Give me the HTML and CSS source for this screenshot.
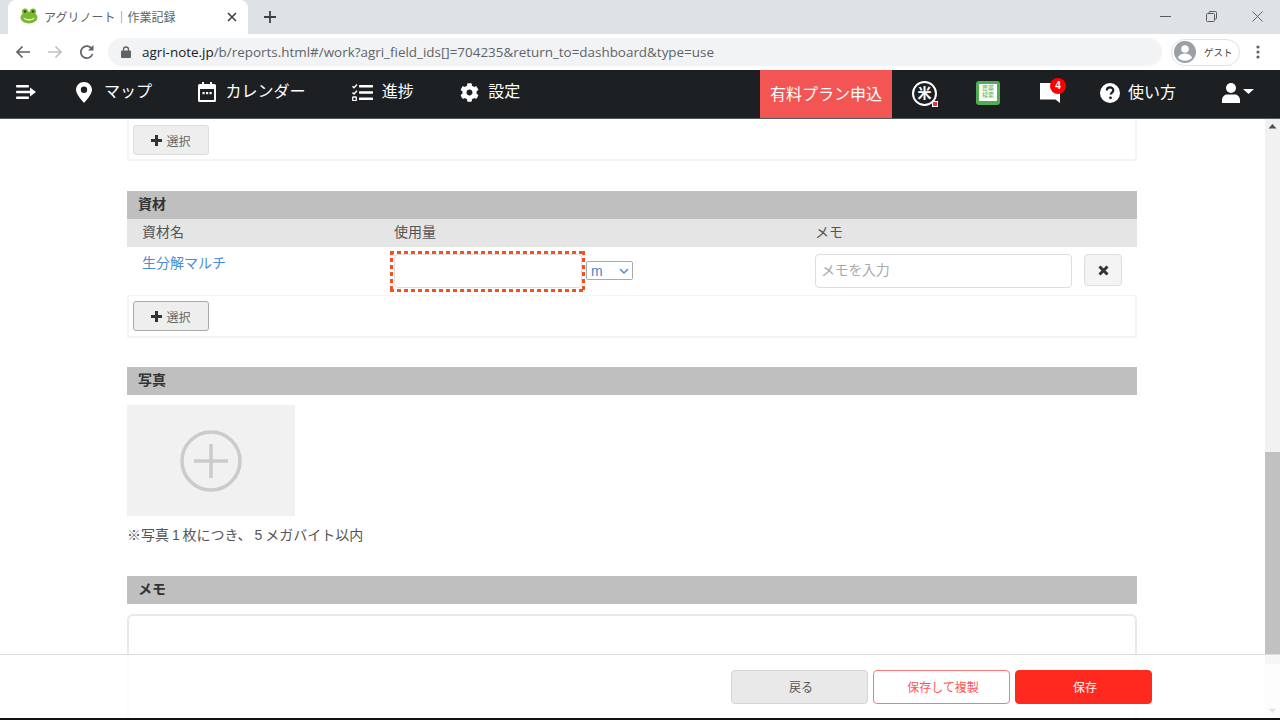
FILE: index.html
```html
<!DOCTYPE html>
<html lang="ja">
<head>
<meta charset="utf-8">
<title>アグリノート｜作業記録</title>
<link rel="stylesheet" href="styles.css">
</head>
<body>
<div class="window">
  <div class="tabstrip">
    <div class="tab">
      <svg class="favicon" width="18" height="16" viewBox="0 0 18 16"><circle cx="5" cy="3.5" r="3" fill="#7cb82f"/><circle cx="13" cy="3.5" r="3" fill="#7cb82f"/><ellipse cx="9" cy="9.5" rx="8.5" ry="6" fill="#7cb82f"/><circle cx="5" cy="3.5" r="1.2" fill="#2f4a12"/><circle cx="13" cy="3.5" r="1.2" fill="#2f4a12"/><path d="M3 9.5q6 3.5 12 0q-2 3-6 3t-6-3z" fill="#fff"/></svg>
      <span class="tab-title">アグリノート｜作業記録</span>
      <svg class="tab-close" width="10" height="10" viewBox="0 0 10 10"><path d="M1 1l8 8M9 1l-8 8" stroke="#3c4043" stroke-width="1.6"/></svg>
    </div>
    <svg class="new-tab" width="12" height="12" viewBox="0 0 12 12"><path d="M6 0v12M0 6h12" stroke="#3c4043" stroke-width="1.8"/></svg>
    <div class="win-controls">
      <svg width="11" height="11" viewBox="0 0 11 11"><path d="M0 5.5h11" stroke="#5a5a5a"/></svg>
      <svg width="11" height="11" viewBox="0 0 11 11" fill="none" stroke="#5a5a5a"><rect x=".5" y="2.5" width="8" height="8" rx="1"/><path d="M3 2.5v-1a1 1 0 0 1 1-1h5.500a1 1 0 0 1 1 1v5.500a1 1 0 0 1-1 1h-1"/></svg>
      <svg width="11" height="11" viewBox="0 0 12 12"><path d="M.5.5l11 11M11.500.5l-11 11" stroke="#5a5a5a"/></svg>
    </div>
  </div>
  <div class="toolbar">
    <svg class="tb-icon" width="16" height="14" viewBox="0 0 16 14" fill="none" stroke="#5f6368" stroke-width="1.700"><path d="M15 7H2M7.500 1.500L2 7l5.500 5.500"/></svg>
    <svg class="tb-icon" width="16" height="14" viewBox="0 0 16 14" fill="none" stroke="#bdc1c6" stroke-width="1.700"><path d="M1 7h13M8.500 1.500L14 7l-5.500 5.500"/></svg>
    <svg class="tb-icon" width="16" height="16" viewBox="0 0 16 16" fill="none"><path d="M13.500 10a6 6 0 1 1-.6-5" stroke="#5f6368" stroke-width="1.700"/><path d="M14.500 1v5.500H9z" fill="#5f6368"/></svg>
    <div class="omnibox">
      <svg width="10" height="12" viewBox="0 0 10 12"><path d="M2.500 5V3.500a2.500 2.500 0 0 1 5 0V5" fill="none" stroke="#5f6368" stroke-width="1.300"/><rect y="4.500" width="10" height="7.500" rx="1" fill="#5f6368"/></svg>
      <span class="url"><span class="url-host">agri-note.jp</span>/b/reports.html#/work?agri_field_ids[]=704235&amp;return_to=dashboard&amp;type=use</span>
    </div>
    <div class="guest">
      <svg width="22" height="22" viewBox="0 0 22 22"><circle cx="11" cy="11" r="11" fill="#9aa0a6"/><circle cx="11" cy="8" r="3.800" fill="#fff"/><path d="M3.800 16.500c2-3.200 4.800-4 7.200-4s5.200.8 7.200 4a9.500 9.500 0 0 1-14.400 0z" fill="#fff"/></svg>
      <span>ゲスト</span>
    </div>
    <svg class="dots" width="4" height="14" viewBox="0 0 4 14"><circle cx="2" cy="2" r="1.600" fill="#5f6368"/><circle cx="2" cy="7" r="1.600" fill="#5f6368"/><circle cx="2" cy="12" r="1.600" fill="#5f6368"/></svg>
  </div>
  <nav class="nav">
    <svg class="nav-menu" width="20" height="14" viewBox="0 0 20 14" fill="#fff"><rect y="0" width="13" height="2.400" rx="1"/><rect y="5.800" width="15" height="2.400" rx="1"/><rect y="11.600" width="13" height="2.400" rx="1"/><path d="M14 2.500L20 7l-6 4.500z"/></svg>
    <div class="nav-item">
      <svg width="19" height="21" viewBox="0 0 19 21"><path fill="#fff" fill-rule="evenodd" d="M8 0C3.600 0 0 3.400 0 7.800 0 12.800 8 21 8 21s8-8.200 8-13.200C16 3.400 12.400 0 8 0zm0 11a3.200 3.200 0 1 1 0-6.400A3.200 3.200 0 0 1 8 11z"/></svg>
      <span>マップ</span>
    </div>
    <div class="nav-item">
      <svg width="18" height="20" viewBox="0 0 18 20"><path fill="#fff" fill-rule="evenodd" d="M4 0h2v2h6V0h2v2h2.500A1.500 1.500 0 0 1 18 3.500v15a1.500 1.500 0 0 1-1.500 1.500h-15A1.500 1.500 0 0 1 0 18.500v-15A1.500 1.500 0 0 1 1.500 2H4zM2 7v11h14V7z"/><rect x="4.500" y="10" width="2.200" height="2.200" fill="#fff"/><rect x="8" y="10" width="2.200" height="2.200" fill="#fff"/><rect x="11.500" y="10" width="2.200" height="2.200" fill="#fff"/></svg>
      <span>カレンダー</span>
    </div>
    <div class="nav-item">
      <svg width="21" height="17" viewBox="0 0 21 17" fill="#fff"><rect x="7" y="1" width="14" height="2.400" rx=".6"/><rect x="7" y="7.300" width="14" height="2.400" rx=".6"/><rect x="7" y="13.600" width="14" height="2.400" rx=".6"/><path d="M.5 2.200l1.500 1.500L5 .5" fill="none" stroke="#fff" stroke-width="1.400"/><path d="M.5 8.500L2 10l3-3.200" fill="none" stroke="#fff" stroke-width="1.400"/><rect x=".7" y="13" width="3.600" height="3.600" rx=".6" fill="none" stroke="#fff" stroke-width="1.300"/></svg>
      <span>進捗</span>
    </div>
    <div class="nav-item">
      <svg width="19" height="19" viewBox="0 0 512 512"><path fill="#fff" d="M487.400 315.700l-42.600-24.600c4.300-23.200 4.300-47 0-70.200l42.600-24.600c4.900-2.800 7.100-8.600 5.500-14-11.100-35.600-30-67.800-54.700-94.600-3.800-4.100-10-5.100-14.800-2.300L380.800 110c-17.900-15.400-38.500-27.300-60.800-35.100V25.800c0-5.600-3.900-10.500-9.400-11.700-36.700-8.200-74.300-7.800-109.200 0-5.500 1.200-9.400 6.100-9.400 11.700V75c-22.200 7.900-42.800 19.800-60.800 35.100L88.700 85.500c-4.900-2.800-11-1.900-14.800 2.300-24.700 26.700-43.600 58.900-54.700 94.600-1.700 5.400.6 11.200 5.500 14L67.300 221c-4.300 23.200-4.300 47 0 70.200l-42.600 24.600c-4.900 2.800-7.100 8.600-5.500 14 11.100 35.600 30 67.800 54.700 94.600 3.800 4.100 10 5.100 14.800 2.300l42.600-24.600c17.900 15.400 38.500 27.300 60.800 35.100v49.200c0 5.600 3.900 10.500 9.400 11.700 36.700 8.200 74.300 7.800 109.200 0 5.500-1.200 9.400-6.100 9.400-11.700v-49.200c22.200-7.900 42.800-19.800 60.800-35.100l42.600 24.600c4.900 2.800 11 1.900 14.800-2.300 24.700-26.700 43.600-58.900 54.700-94.600 1.500-5.500-.7-11.300-5.600-14.100zM256 336c-44.100 0-80-35.900-80-80s35.900-80 80-80 80 35.900 80 80-35.900 80-80 80z"/></svg>
      <span>設定</span>
    </div>
    <div class="nav-right">
      <div class="plan">有料プラン申込</div>
      <div class="rice"><span>米</span><i class="rice-dot"></i></div>
      <div class="book"><div class="book-page"><span>農薬</span><span>検索</span></div></div>
      <div class="bubble">
        <svg width="20" height="20" viewBox="0 0 20 20"><path fill="#fff" d="M0 0h20v20l-4.500-3.500H0z"/></svg>
        <b class="badge">4</b>
      </div>
      <div class="nav-item help">
        <svg width="20" height="20" viewBox="0 0 20 20"><circle cx="10" cy="10" r="10" fill="#fff"/><path d="M6.800 7.600c0-2 1.500-3.200 3.300-3.200 1.900 0 3.200 1.200 3.200 2.800 0 2.400-2.600 2.400-2.600 4.400" fill="none" stroke="#1c2023" stroke-width="2.200"/><circle cx="10.500" cy="14.800" r="1.400" fill="#1c2023"/></svg>
        <span>使い方</span>
      </div>
      <svg class="user" width="32" height="20" viewBox="0 0 32 20" fill="#fff"><circle cx="9" cy="5" r="5"/><path d="M0 20v-3c0-3.500 3-5.500 5-5.500h8c2 0 5 2 5 5.500v3z"/><path d="M21 6h11l-5.500 5z"/></svg>
    </div>
  </nav>
  <div class="viewport">
    <main class="content">
      <div class="box box-cut">
        <button class="btn-select"><svg class="plus" width="11" height="11" viewBox="0 0 11 11"><path d="M5.500 0v11M0 5.500h11" stroke="#333" stroke-width="3"/></svg>選択</button>
      </div>

      <section class="section">
        <h2 class="section-head">資材</h2>
        <div class="grid grid-head">
          <div>資材名</div><div>使用量</div><div>メモ</div>
        </div>
        <div class="grid grid-row">
          <a class="link">生分解マルチ</a>
          <div class="amount">
            <div class="amount-focus"><div class="amount-input"></div></div>
            <div class="unit">m<svg width="10" height="6" viewBox="0 0 10 6"><path d="M1 1l4 4 4-4" fill="none" stroke="#4a86c5" stroke-width="1.400"/></svg></div>
          </div>
          <div class="memo-cell">
            <div class="memo-input">メモを入力</div>
            <button class="btn-x"><svg width="11" height="11" viewBox="0 0 11 11"><path d="M1.500 1.500l8 8M9.500 1.500l-8 8" stroke="#333" stroke-width="3"/></svg></button>
          </div>
        </div>
        <div class="box box-row">
          <button class="btn-select btn-dark"><svg class="plus" width="11" height="11" viewBox="0 0 11 11"><path d="M5.500 0v11M0 5.500h11" stroke="#333" stroke-width="3"/></svg>選択</button>
        </div>
      </section>

      <section class="section section-photo">
        <h2 class="section-head">写真</h2>
        <div class="photo">
          <svg width="62" height="62" viewBox="0 0 62 62" fill="none" stroke="#cbcbcb" stroke-width="3.500"><circle cx="31" cy="31" r="29"/><path d="M14 31h34M31 14v34"/></svg>
        </div>
        <p class="note">※写真 1 枚につき、 5 メガバイト以内</p>
      </section>

      <section class="section section-memo">
        <h2 class="section-head">メモ</h2>
        <div class="textarea"></div>
      </section>
    </main>
    <div class="scrollbar">
      <svg class="sb-arrow" width="15" height="15" viewBox="0 0 15 15"><path d="M3.500 9.500L7.500 5l4 4.500z" fill="#505050"/></svg>
      <div class="sb-thumb"></div>
      <svg class="sb-arrow" width="15" height="15" viewBox="0 0 15 15"><path d="M3.500 5.500L7.500 10l4-4.500z" fill="#505050"/></svg>
    </div>
    <footer class="actions">
      <button class="act act-back">戻る</button>
      <button class="act act-copy">保存して複製</button>
      <button class="act act-save">保存</button>
    </footer>
  </div>
  <div class="edge"></div>
</div>
</body>
</html>
```

FILE: styles.css
```css
* { box-sizing: border-box; }
html, body { margin: 0; padding: 0; height: 100%; overflow: hidden; background: #fff; }
body { font-family: "Liberation Sans", "Noto Sans CJK JP", sans-serif; font-size: 14px; color: #555; }
button { font-family: inherit; cursor: pointer; padding: 0; }

.window { display: flex; flex-direction: column; width: 1280px; height: 720px; }

/* browser chrome */
.tabstrip { display: flex; align-items: flex-end; height: 34px; background: #dee1e6; padding-left: 8px; flex: none; }
.tab { display: flex; align-items: center; width: 240px; height: 34px; background: #fff; border-radius: 8px 8px 0 0; padding: 0 11px 0 12px; }
.favicon { flex: none; margin-bottom: 2px; }
.tab-title { margin: 2px 0 0 6px; font-size: 12px; line-height: 16px; color: #5f6368; flex: 1; white-space: nowrap; }
.tab-close { flex: none; }
.new-tab { margin: 0 0 11px 16px; }
.win-controls { margin-left: auto; align-self: flex-start; display: flex; align-items: center; gap: 35px; padding: 9px 17px 0 0; height: 24px; }
.toolbar { display: flex; align-items: center; height: 36px; padding: 0 0 0 15px; background: #fff; flex: none; }
.tb-icon { margin-right: 16px; }
.tb-icon:nth-of-type(3) { margin-right: 13px; }
.omnibox { display: flex; align-items: center; width: 1054px; height: 28px; border-radius: 14px; background: #f1f3f4; padding-left: 13px; gap: 11px; }
.url { font-family: "Open Sans", sans-serif; font-size: 13.430px; color: #5f6368; white-space: nowrap; line-height: 18px; }
.url-host { color: #202124; }
.guest { display: flex; align-items: center; width: 69px; height: 27px; margin-left: 9px; border: 1px solid #dfe1e5; border-radius: 14px; padding-left: 2px; gap: 8px; font-size: 9.500px; color: #3c4043; }
.dots { margin-left: 16px; }

/* app nav */
.nav { display: flex; align-items: center; height: 49px; padding: 0 0 4px 16px; background: #1c2023; border-bottom: 1px solid #55585a; color: #fff; flex: none; gap: 40px; }
.nav-menu { flex: none; }
.nav-item { display: flex; align-items: center; gap: 9px; font-size: 16px; line-height: 22px; white-space: nowrap; margin-right: 6.400px; }
.nav-right { display: flex; align-items: center; margin-left: auto; height: 48px; margin-bottom: -4px; padding-bottom: 2px; }
.plan { display: flex; align-items: center; justify-content: center; width: 132px; height: 48px; margin-bottom: -2px; padding-bottom: 2px; background: #f25553; font-size: 16px; }
.rice { position: relative; display: flex; align-items: center; justify-content: center; width: 25px; height: 25px; margin-left: 20px; border: 2.500px solid #fff; border-radius: 50%; font-size: 14px; font-weight: 700; line-height: 1; }
.rice-dot { position: absolute; right: -3px; bottom: -3px; width: 6px; height: 6px; background: #e8324a; border: 1px solid #fff; }
.book { display: flex; width: 24px; height: 24px; margin-left: 39px; padding: 3px 3px 4px; background: #4fae52; border-radius: 3px; }
.book-page { display: flex; flex-direction: column; align-items: center; width: 100%; background: #fff; color: #4fae52; font-size: 6px; line-height: 7px; padding-top: 1px; overflow: hidden; }
.bubble { position: relative; display: flex; width: 26px; height: 20px; margin-left: 40px; }
.badge { position: absolute; top: -5px; right: 0; width: 16px; height: 16px; border-radius: 50%; background: #f00; font-size: 10px; line-height: 16px; text-align: center; }
.help { margin-left: 34px; margin-right: 0; gap: 8px; }
.user { margin-left: 46px; margin-right: 26px; }

/* page */
.viewport { position: relative; display: flex; flex: 1; min-height: 0; }
.content { flex: 1; min-width: 0; padding-left: 127px; padding-right: 128px; overflow: hidden; }
.box { height: 42px; padding: 6px 4px 0; border: 2px solid #f4f4f4; border-top-width: 1px; }
.box-cut { border-top: 0; }
.box-row { height: 43px; padding-top: 5px; }
.btn-select { display: flex; align-items: center; justify-content: center; gap: 4px; width: 76px; height: 30px; background: #eee; border: 1px solid #ddd; border-radius: 3px; font-size: 12px; color: #666; }
.btn-dark { border: 1px solid #aaa; }
.plus { flex: none; }
.section { margin-top: 30px; }
.section-head { margin: 0; height: 28px; padding-left: 11px; background: #bfbfbf; font-size: 14px; font-weight: 700; line-height: 27px; color: #333; }
.grid { display: grid; grid-template-columns: 252px 421px 1fr; padding-left: 15px; }
.grid-head { height: 28px; background: #e5e5e5; line-height: 27px; color: #555; }
.grid-row { height: 48px; }
.link { color: #4a8bd6; line-height: 20px; padding-top: 6px; }
.amount { display: flex; align-items: flex-start; }
.amount-focus {
  flex: none; width: 195px; height: 41px; margin: 4px 0 0 -4px; padding: 3px 3px 4px 4px;
  background:
    repeating-linear-gradient(90deg, #f4511e 0 4px, transparent 4px 7px) left top / 100% 3px no-repeat,
    repeating-linear-gradient(90deg, #f4511e 0 4px, transparent 4px 7px) left bottom / 100% 3px no-repeat,
    repeating-linear-gradient(180deg, #f4511e 0 4px, transparent 4px 7px) left top / 3px 100% no-repeat,
    repeating-linear-gradient(180deg, #f4511e 0 4px, transparent 4px 7px) right top / 3px 100% no-repeat;
}
.amount-input { height: 34px; border: 1px solid #ddd; border-radius: 4px; background: #fff; }
.unit { display: flex; align-items: center; justify-content: space-between; flex: none; width: 47px; height: 19px; margin: 14px 0 0 1px; padding: 0 3px 0 4px; border: 1px solid #aaa; border-radius: 2px; color: #4a86c5; font-size: 14px; }
.memo-cell { display: flex; align-items: flex-start; }
.memo-input { width: 257px; height: 34px; margin-top: 7px; padding-left: 5px; border: 1px solid #ddd; border-radius: 4px; color: #aaa; font-size: 14px; line-height: 31px; letter-spacing: -.3px; }
.btn-x { display: flex; align-items: center; justify-content: center; width: 38px; height: 32px; margin: 7px 0 0 12px; background: #f4f4f4; border: 1px solid #ddd; border-radius: 4px; }
.photo { display: flex; align-items: center; justify-content: center; width: 168px; height: 111px; margin-top: 10px; background: #f1f1f1; }
.note { margin: 9px 0 0; line-height: 20px; color: #555; word-spacing: -1px; }
.section-photo { margin-top: 29px; }
.section-memo { margin-top: 31px; }
.textarea { height: 200px; margin-top: 10px; border: 2px solid #e8e8e8; border-radius: 6px; }

.scrollbar { display: flex; flex-direction: column; width: 15px; background: #f1f1f1; flex: none; }
.sb-arrow { flex: none; }
.sb-thumb { height: 212px; margin-top: 318px; margin-bottom: auto; background: #c1c1c1; }

.actions { position: absolute; left: 0; right: 0; bottom: 0; height: 64px; display: flex; align-items: flex-start; padding: 15px 0 0 731px; gap: 5px; background: rgba(255, 255, 255, .85); border-top: 1px solid #ddd; }
.act { width: 137px; height: 34px; padding: 0 0 2px 3px; border-radius: 4px; font-size: 12px; }
.act-back { background: #e9e9e9; border: 1px solid #d5d5d5; color: #555; }
.act-copy { background: #fff; border: 1px solid #f77; color: #f55; }
.act-save { background: #ff2a1f; border: 1px solid #ff2a1f; color: #fff; }
.edge { height: 2px; background: #111; flex: none; }
```
